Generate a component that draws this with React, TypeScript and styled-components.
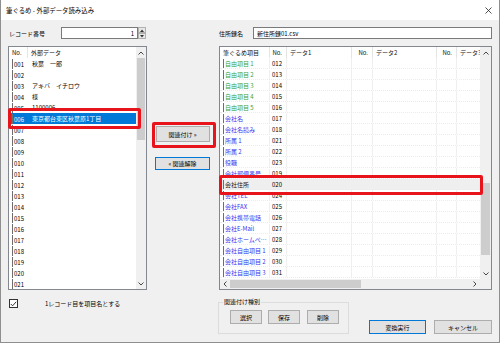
import React from 'react';
import styled, { createGlobalStyle, css } from 'styled-components';

const Global = createGlobalStyle`
  html, body { margin: 0; padding: 0; background: #ffffff; }
  body { font-family: "Noto Sans CJK JP", "Noto Sans", sans-serif; color: #000; }
  * { box-sizing: border-box; }
`;

const Window = styled.div`
  width: 500px;
  height: 343px;
  display: flex;
  flex-direction: column;
  background: #f0f0f0;
  border: 1px solid #8f8f8f;
  border-top: none;
  overflow: hidden;
`;

const TitleBar = styled.div`
  height: 20px;
  flex: none;
  background: #ffffff;
  display: flex;
  align-items: center;
  justify-content: space-between;
  padding: 0 7px 0 5px;
  font-size: 6.4px;
`;

const Content = styled.div`
  flex: 1;
  display: grid;
  grid-template-columns: 139px 72px 273px;
  grid-template-rows: 12px 244px 1fr;
  row-gap: 7px;
  padding: 7px 7px 0 7px;
`;

const TopCell = styled.div`
  display: flex;
  align-items: center;
  font-size: 6px;
`;

const Label = styled.span<{ $w: number }>`
  width: ${(p) => p.$w}px;
  flex: none;
  padding-left: 1px;
  white-space: nowrap;
`;

const TextBox = styled.div<{ $align?: string }>`
  flex: 1;
  height: 12px;
  background: #fff;
  border: 1px solid #7a7a7a;
  display: flex;
  align-items: center;
  justify-content: ${(p) => p.$align || 'flex-start'};
  padding: 0 3px;
  font-size: 6px;
`;

const Spinner = styled.div`
  width: 8px;
  height: 12px;
  display: flex;
  flex-direction: column;
  gap: 0;
  margin-right: 1px;
`;

const SpinBtn = styled.div`
  flex: 1;
  background: #e8e8e8;
  border: 1px solid #b0b0b0;
  display: flex;
  align-items: center;
  justify-content: center;
`;

const ListBox = styled.div`
  position: relative;
  background: #fff;
  border: 1px solid #828790;
  display: flex;
  font-size: 6px;
`;

const ListInner = styled.div`
  flex: 1;
  display: flex;
  flex-direction: column;
  overflow: hidden;
  min-width: 0;
`;

const HeaderRow = styled.div<{ $cols: string }>`
  height: 11px;
  flex: none;
  display: grid;
  grid-template-columns: ${(p) => p.$cols};
  align-items: stretch;
`;

const HeadCell = styled.div<{ $right?: boolean }>`
  display: flex;
  align-items: center;
  justify-content: ${(p) => (p.$right ? 'flex-end' : 'flex-start')};
  padding: 0 ${(p) => (p.$right ? '4px' : '3px')} 0 3px;
  border-right: 1px solid #e5e5e5;
  white-space: nowrap;
  overflow: hidden;
  color: #111;
  &:last-child { border-right: none; }
`;

const Row = styled.div<{ $cols: string; $sel?: boolean; $hl?: boolean; $grid?: boolean }>`
  height: 11px;
  flex: none;
  display: grid;
  grid-template-columns: ${(p) => p.$cols};
  align-items: stretch;
  ${(p) =>
    p.$grid &&
    css`
      border-bottom: 1px dotted #ececec;
    `}
  ${(p) =>
    p.$sel &&
    css`
      background: #0078d7;
      color: #fff;
    `}
  ${(p) =>
    p.$hl &&
    css`
      background: #efefef;
    `}
`;

const Cell = styled.div<{ $lead?: boolean; $color?: string; $grid?: boolean; $pad?: number }>`
  display: flex;
  align-items: center;
  padding-left: ${(p) => (p.$pad ?? 3)}px;
  white-space: nowrap;
  overflow: hidden;
  color: ${(p) => p.$color || 'inherit'};
  ${(p) =>
    p.$lead &&
    css`
      border-left: 1px solid #6d6d6d;
      margin: 1px 0 0 3px;
      padding-left: 1px;
    `}
  ${(p) =>
    p.$grid &&
    css`
      border-right: 1px solid #efefef;
    `}
`;

const VScroll = styled.div<{ $w: number }>`
  width: ${(p) => p.$w}px;
  flex: none;
  background: #f0f0f0;
  display: flex;
  flex-direction: column;
  align-items: stretch;
`;

const Arrow = styled.div<{ $h?: number }>`
  height: ${(p) => p.$h ?? 11}px;
  flex: none;
  display: flex;
  align-items: center;
  justify-content: center;
`;

const Track = styled.div`
  flex: 1;
  display: flex;
  flex-direction: column;
  padding: 0 1px;
`;

const Thumb = styled.div<{ $top: number; $len: number }>`
  margin-top: ${(p) => p.$top}px;
  height: ${(p) => p.$len}px;
  background: #cdcdcd;
`;

const HScroll = styled.div`
  height: 10px;
  flex: none;
  background: #f0f0f0;
  display: flex;
  align-items: stretch;
`;

const HTrack = styled.div`
  flex: 1;
  display: flex;
  padding: 1px 0;
`;

const HThumb = styled.div<{ $left: number; $len: number }>`
  margin-left: ${(p) => p.$left}px;
  width: ${(p) => p.$len}px;
  background: #cdcdcd;
`;

const RedBox = styled.div<{ $l: number; $t: number; $w: number; $h: number }>`
  position: absolute;
  left: ${(p) => p.$l}px;
  top: ${(p) => p.$t}px;
  width: ${(p) => p.$w}px;
  height: ${(p) => p.$h}px;
  border: 3px solid #e8141c;
  border-radius: 2px;
  pointer-events: none;
`;

const MiddleCol = styled.div`
  display: flex;
  flex-direction: column;
  align-items: center;
  padding-top: 80px;
  gap: 15px;
  padding-right: 1px;
`;

const Btn = styled.div<{ $w: number; $h?: number; $def?: boolean }>`
  position: relative;
  width: ${(p) => p.$w}px;
  height: ${(p) => p.$h ?? 14}px;
  flex: none;
  background: #e1e1e1;
  border: 1px solid ${(p) => (p.$def ? '#0078d7' : '#adadad')};
  display: flex;
  align-items: center;
  justify-content: center;
  font-size: 6px;
  white-space: nowrap;
`;

const BottomLeft = styled.div`
  display: flex;
  align-items: flex-start;
  padding-top: 2px;
  padding-left: 1px;
  font-size: 6px;
`;

const CheckBox = styled.div`
  width: 9px;
  height: 9px;
  flex: none;
  background: #fff;
  border: 1px solid #333;
  display: flex;
  align-items: center;
  justify-content: center;
`;

const CheckLabel = styled.span`
  margin-left: 27px;
  line-height: 9px;
  white-space: nowrap;
`;

const BottomRight = styled.div`
  grid-column: 3;
  display: flex;
  align-items: flex-start;
  padding-top: 1px;
  margin-left: -1px;
  font-size: 6px;
`;

const Group = styled.fieldset`
  margin: 0;
  width: 131px;
  height: 36px;
  border: 1px solid #dcdcdc;
  padding: 4px 0 0 11px;
  display: flex;
  gap: 6px;
  align-items: flex-start;
  legend {
    padding: 0 1px;
    margin-left: -7px;
    font-size: 6px;
    line-height: 8px;
  }
`;

const ActionBtns = styled.div`
  display: flex;
  gap: 8px;
  margin-left: 20px;
  margin-top: 22px;
`;

const Up = () => (
  <svg width="6" height="4" viewBox="0 0 6 4">
    <path d="M0.5 3.5 L3 1 L5.5 3.5" fill="none" stroke="#333" strokeWidth="0.9" />
  </svg>
);
const Down = () => (
  <svg width="6" height="4" viewBox="0 0 6 4">
    <path d="M0.5 0.5 L3 3 L5.5 0.5" fill="none" stroke="#333" strokeWidth="0.9" />
  </svg>
);
const Left = () => (
  <svg width="4" height="6" viewBox="0 0 4 6">
    <path d="M3.5 0.5 L1 3 L3.5 5.5" fill="none" stroke="#333" strokeWidth="0.9" />
  </svg>
);
const Right = () => (
  <svg width="4" height="6" viewBox="0 0 4 6">
    <path d="M0.5 0.5 L3 3 L0.5 5.5" fill="none" stroke="#333" strokeWidth="0.9" />
  </svg>
);
const Tri = ({ up }: { up?: boolean }) => (
  <svg width="4" height="3" viewBox="0 0 4 3">
    <path d={up ? 'M0 3 L2 0.5 L4 3 Z' : 'M0 0 L2 2.5 L4 0 Z'} fill="#333" />
  </svg>
);

const leftData: [string, string][] = [
  ['001', '秋葉　一郎'],
  ['002', ''],
  ['003', 'アキバ　イチロウ'],
  ['004', '様'],
  ['005', '1100006'],
  ['006', '東京都台東区秋葉原1丁目'],
];
for (let i = 7; i <= 21; i++) leftData.push([String(i).padStart(3, '0'), '']);

const GREEN = '#39a23a';
const BLUE = '#3535f0';
const rightData: [string, string, string][] = [
  ['自由項目 1', '012', GREEN],
  ['自由項目 2', '013', GREEN],
  ['自由項目 3', '014', GREEN],
  ['自由項目 4', '015', GREEN],
  ['自由項目 5', '016', GREEN],
  ['会社名', '017', BLUE],
  ['会社名読み', '018', BLUE],
  ['所属 1', '021', BLUE],
  ['所属 2', '022', BLUE],
  ['役職', '023', BLUE],
  ['会社郵便番号', '019', BLUE],
  ['会社住所', '020', '#111'],
  ['会社TEL', '024', BLUE],
  ['会社FAX', '025', BLUE],
  ['会社携帯電話', '026', BLUE],
  ['会社E-Mail', '027', BLUE],
  ['会社ホームペ…', '028', BLUE],
  ['会社自由項目 1', '029', BLUE],
  ['会社自由項目 2', '030', BLUE],
  ['会社自由項目 3', '031', BLUE],
];

const LCOLS = '19px 1fr';
const RCOLS = '50px 17px 65px 21px 64px 20px 23px';

export default function App() {
  return (
    <>
      <Global />
      <Window>
        <TitleBar>
          <span>筆ぐるめ - 外部データ読み込み</span>
          <svg width="7" height="7" viewBox="0 0 7 7">
            <path d="M0.5 0.5 L6.5 6.5 M6.5 0.5 L0.5 6.5" stroke="#222" strokeWidth="0.8" />
          </svg>
        </TitleBar>
        <Content>
          <TopCell>
            <Label $w={53}>レコード番号</Label>
            <TextBox $align="flex-end">1</TextBox>
            <Spinner>
              <SpinBtn>
                <Tri up />
              </SpinBtn>
              <SpinBtn>
                <Tri />
              </SpinBtn>
            </Spinner>
          </TopCell>
          <div />
          <TopCell style={{ marginLeft: -1 }}>
            <Label $w={35}>住所録名</Label>
            <TextBox>新住所録01.csv</TextBox>
          </TopCell>

          <ListBox>
            <ListInner>
              <HeaderRow $cols={LCOLS}>
                <HeadCell>No.</HeadCell>
                <HeadCell>外部データ</HeadCell>
              </HeaderRow>
              {leftData.map(([n, v]) => (
                <Row key={n} $cols={LCOLS} $sel={n === '006'}>
                  <Cell $lead>{n}</Cell>
                  <Cell $pad={4}>{v}</Cell>
                </Row>
              ))}
            </ListInner>
            <VScroll $w={10}>
              <Arrow>
                <Up />
              </Arrow>
              <Track>
                <Thumb $top={0} $len={82} />
              </Track>
              <Arrow>
                <Down />
              </Arrow>
            </VScroll>
            <RedBox $l={-1} $t={61} $w={133} $h={21} />
          </ListBox>

          <MiddleCol>
            <Btn $w={54} $h={16}>
              関連付け »
              <RedBox $l={-5} $t={-5} $w={64} $h={26} />
            </Btn>
            <Btn $w={55} $h={13} $def>
              « 関連解除
            </Btn>
          </MiddleCol>

          <ListBox>
            <ListInner>
              <HeaderRow $cols={RCOLS}>
                <HeadCell>筆ぐるめ項目</HeadCell>
                <HeadCell $right>No.</HeadCell>
                <HeadCell>データ1</HeadCell>
                <HeadCell $right>No.</HeadCell>
                <HeadCell>データ2</HeadCell>
                <HeadCell $right>No.</HeadCell>
                <HeadCell>データ3</HeadCell>
              </HeaderRow>
              {rightData.map(([name, no, color]) => (
                <Row key={no} $cols={RCOLS} $grid $hl={no === '020'}>
                  <Cell $lead $grid $color={color}>
                    {name}
                  </Cell>
                  <Cell $grid $pad={2}>
                    {no}
                  </Cell>
                  <Cell $grid />
                  <Cell $grid />
                  <Cell $grid />
                  <Cell $grid />
                  <Cell />
                </Row>
              ))}
              <div style={{ flex: 1 }} />
              <HScroll>
                <Arrow $h={10} style={{ width: 10 }}>
                  <Left />
                </Arrow>
                <HTrack>
                  <HThumb $left={0} $len={131} />
                </HTrack>
                <Arrow $h={10} style={{ width: 10 }}>
                  <Right />
                </Arrow>
              </HScroll>
            </ListInner>
            <VScroll $w={11}>
              <Arrow>
                <Up />
              </Arrow>
              <Track>
                <Thumb $top={125} $len={72} />
              </Track>
              <Arrow>
                <Down />
              </Arrow>
              <Arrow $h={10} />
            </VScroll>
            <RedBox $l={-1} $t={128} $w={264} $h={20} />
          </ListBox>

          <BottomLeft>
            <CheckBox>
              <svg width="7" height="6" viewBox="0 0 7 6">
                <path d="M0.8 3 L2.6 4.8 L6.2 0.8" fill="none" stroke="#222" strokeWidth="0.9" />
              </svg>
            </CheckBox>
            <CheckLabel>1レコード目を項目名とする</CheckLabel>
          </BottomLeft>

          <BottomRight>
            <Group>
              <legend>関連付け種別</legend>
              <Btn $w={32}>選択</Btn>
              <Btn $w={32}>保存</Btn>
              <Btn $w={32} style={{ marginLeft: 1 }}>削除</Btn>
            </Group>
            <ActionBtns>
              <Btn $w={57} $def>
                変換実行
              </Btn>
              <Btn $w={58}>キャンセル</Btn>
            </ActionBtns>
          </BottomRight>
        </Content>
      </Window>
    </>
  );
}
